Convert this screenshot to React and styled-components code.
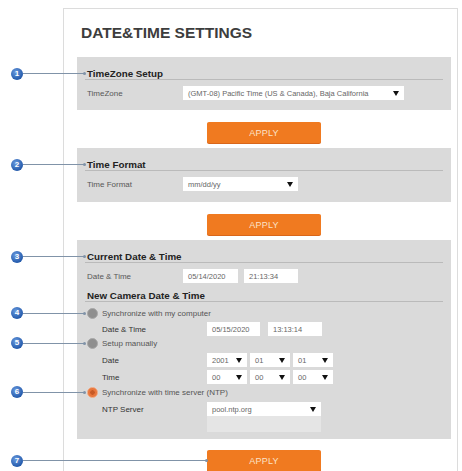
import React from "react";
import styled, { createGlobalStyle } from "styled-components";

const GlobalStyle = createGlobalStyle`
  html, body {
    margin: 0;
    padding: 0;
    background: #fff;
  }
  body {
    font-family: "Liberation Sans", Arial, sans-serif;
    overflow: hidden;
  }
`;

const Page = styled.div`
  padding-top: 8px;
  height: 471px;
  box-sizing: border-box;
  overflow: hidden;
`;

const Frame = styled.div`
  margin-left: 63px;
  width: 395px;
  height: 463px;
  box-sizing: border-box;
  border: 1px solid #dcdcdc;
  border-bottom: none;
  padding: 0 6px 0 13px;
`;

const Title = styled.h1`
  margin: 0;
  padding: 15px 0 0 4px;
  font-size: 15.5px;
  line-height: 18px;
  font-weight: bold;
  color: #3d3d3d;
`;

const Section = styled.div`
  margin-top: ${(p) => p.$mt || 0}px;
  background: #dadada;
  padding: 0 8px ${(p) => p.$pb ?? 10}px;
`;

const Header = styled.div`
  margin-top: ${(p) => (p.$sub ? 7 : 0)}px;
  padding: ${(p) => (p.$sub ? 0 : 11)}px 0 0 2px;
  line-height: 11px;
  font-size: 9.8px;
  font-weight: bold;
  color: #222;
  border-bottom: 1px solid #bababa;
`;

const HeaderTitle = styled.span`
  position: relative;
  display: inline-block;
`;

const Row = styled.div`
  display: flex;
  align-items: center;
  height: 14px;
  margin-top: ${(p) => p.$mt || 0}px;
  padding-left: ${(p) => p.$indent || 2}px;
`;

const Label = styled.div`
  width: ${(p) => p.$w}px;
  flex-shrink: 0;
  font-size: 8px;
  color: ${(p) => (p.$dark ? "#333" : "#585858")};
`;

const Fields = styled.div`
  display: flex;
  gap: ${(p) => p.$gap || 0}px;
`;

const Field = styled.div`
  width: ${(p) => p.$w}px;
  height: 14px;
  box-sizing: border-box;
  background: #fff;
  display: flex;
  align-items: center;
  justify-content: space-between;
  padding: 0 5px;
  font-size: 7.5px;
  color: #666;
  white-space: nowrap;
  overflow: hidden;
`;

const Arrow = styled.span`
  flex-shrink: 0;
  width: 0;
  height: 0;
  border-left: 3.5px solid transparent;
  border-right: 3.5px solid transparent;
  border-top: 5px solid #111;
`;

const Disabled = styled.div`
  margin-left: 122px;
  width: 114px;
  height: 16px;
  background: #e5e5e5;
`;

const RadioRow = styled.div`
  position: relative;
  display: flex;
  align-items: center;
  gap: 4px;
  height: 12px;
  margin-top: ${(p) => p.$mt || 0}px;
  padding-left: 2px;
  font-size: 8px;
  color: #555;
`;

const Radio = styled.span`
  width: 11px;
  height: 11px;
  box-sizing: border-box;
  border-radius: 50%;
  flex-shrink: 0;
  background: ${(p) =>
    p.$on
      ? "radial-gradient(circle, #c75a26 0 2px, #e8763c 2.5px)"
      : "#8f8f8f"};
  border: 1px solid ${(p) => (p.$on ? "#f1a57c" : "#a9a9a9")};
`;

const ApplyButton = styled.div`
  position: relative;
  width: 114px;
  height: 21px;
  margin: ${(p) => p.$mt || 12}px auto ${(p) => p.$mb ?? 5}px;
  background: #f07a20;
  border-radius: 2px;
  box-shadow: 0 1px 0 #d9661a;
  color: #fbe2c9;
  font-size: 9px;
  display: flex;
  align-items: center;
  justify-content: center;
  letter-spacing: 0.2px;
`;

const Marker = styled.div`
  position: absolute;
  top: 50%;
  right: calc(100% + ${(p) => p.$off || 0}px);
  width: ${(p) => p.$w}px;
  transform: translateY(-50%);
  display: flex;
  align-items: center;
  pointer-events: none;
`;

const Badge = styled.span`
  width: 12px;
  height: 12px;
  border-radius: 50%;
  flex-shrink: 0;
  background: radial-gradient(circle at 40% 35%, #6a9be0, #1f56a8 75%);
  color: #fff;
  font-size: 8px;
  font-weight: bold;
  line-height: 12px;
  text-align: center;
`;

const Leader = styled.span`
  flex: 1;
  height: 1px;
  background: #8093a8;
  position: relative;

  &::after {
    content: "";
    position: absolute;
    right: -1px;
    top: -1px;
    width: 3px;
    height: 3px;
    border-radius: 50%;
    background: #8093a8;
  }
`;

function Callout({ n, w, off }) {
  return (
    <Marker $w={w} $off={off}>
      <Badge>{n}</Badge>
      <Leader />
    </Marker>
  );
}

function Select({ w, children }) {
  return (
    <Field $w={w}>
      <span>{children}</span>
      <Arrow />
    </Field>
  );
}

export default function App() {
  return (
    <Page>
      <GlobalStyle />
      <Frame>
        <Title>DATE&amp;TIME SETTINGS</Title>

        <Section $mt={15}>
          <Header>
            <HeaderTitle>
              <Callout n="1" w={74} off={2} />
              TimeZone Setup
            </HeaderTitle>
          </Header>
          <Row $mt={6}>
            <Label $w={96}>TimeZone</Label>
            <Select w={221}>(GMT-08) Pacific Time (US &amp; Canada), Baja California</Select>
          </Row>
        </Section>

        <ApplyButton>APPLY</ApplyButton>

        <Section $pb={11}>
          <Header>
            <HeaderTitle>
              <Callout n="2" w={74} off={2} />
              Time Format
            </HeaderTitle>
          </Header>
          <Row $mt={6}>
            <Label $w={96}>Time Format</Label>
            <Select w={115}>mm/dd/yy</Select>
          </Row>
        </Section>

        <ApplyButton>APPLY</ApplyButton>

        <Section $pb={7}>
          <Header>
            <HeaderTitle>
              <Callout n="3" w={74} off={2} />
              Current Date &amp; Time
            </HeaderTitle>
          </Header>
          <Row $mt={6}>
            <Label $w={96}>Date &amp; Time</Label>
            <Fields $gap={6}>
              <Field $w={55}>05/14/2020</Field>
              <Field $w={54}>21:13:34</Field>
            </Fields>
          </Row>

          <Header $sub>New Camera Date &amp; Time</Header>

          <RadioRow $mt={5}>
            <Callout n="4" w={74} />
            <Radio />
            Synchronize with my computer
          </RadioRow>
          <Row $mt={3} $indent={17}>
            <Label $w={105} $dark>Date &amp; Time</Label>
            <Fields $gap={8}>
              <Field $w={53}>05/15/2020</Field>
              <Field $w={54}>13:13:14</Field>
            </Fields>
          </Row>

          <RadioRow $mt={1}>
            <Callout n="5" w={74} />
            <Radio />
            Setup manually
          </RadioRow>
          <Row $mt={4} $indent={17}>
            <Label $w={105} $dark>Date</Label>
            <Fields $gap={3}>
              <Select w={40}>2001</Select>
              <Select w={40}>01</Select>
              <Select w={40}>01</Select>
            </Fields>
          </Row>
          <Row $mt={3} $indent={17}>
            <Label $w={105} $dark>Time</Label>
            <Fields $gap={3}>
              <Select w={40}>00</Select>
              <Select w={40}>00</Select>
              <Select w={40}>00</Select>
            </Fields>
          </Row>

          <RadioRow $mt={2}>
            <Callout n="6" w={74} />
            <Radio $on />
            Synchronize with time server (NTP)
          </RadioRow>
          <Row $mt={4} $indent={17}>
            <Label $w={105} $dark>NTP Server</Label>
            <Select w={114}>pool.ntp.org</Select>
          </Row>
          <Disabled />
        </Section>

        <ApplyButton $mt={11}>
          <Callout n="7" w={196} />
          APPLY
        </ApplyButton>
      </Frame>
    </Page>
  );
}
